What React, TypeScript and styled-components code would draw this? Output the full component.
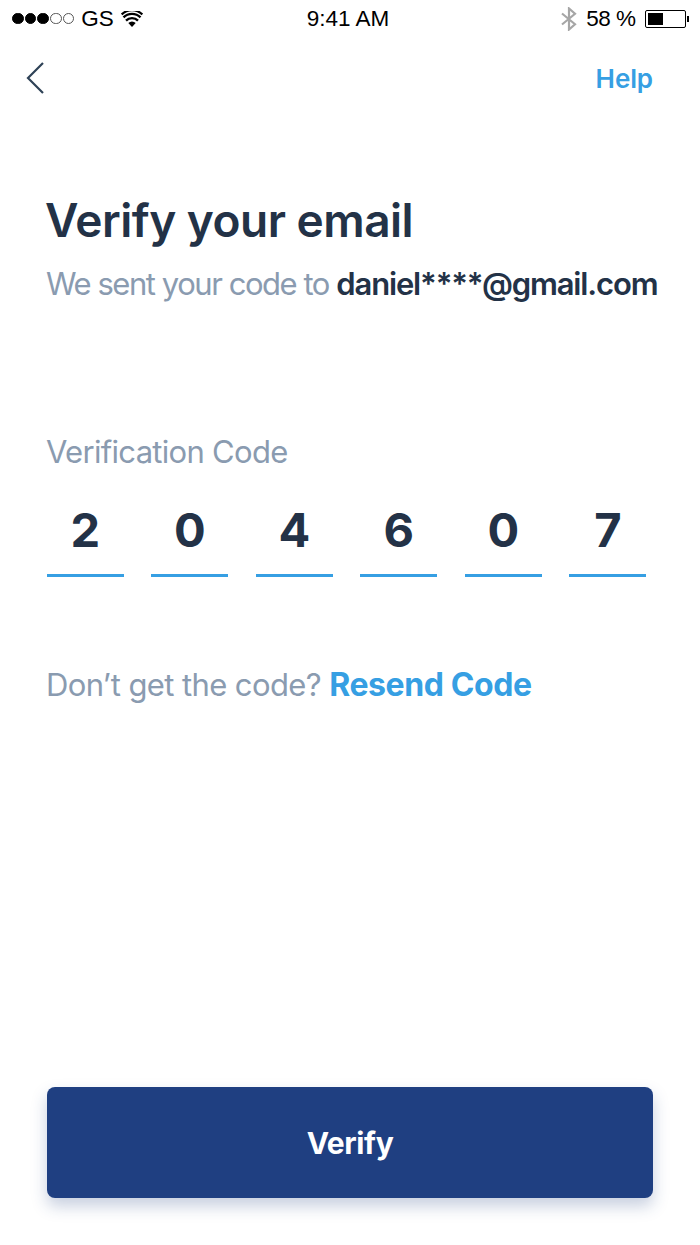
import React from "react";
import styled, { createGlobalStyle } from "styled-components";

const Global = createGlobalStyle`
  html, body { margin: 0; padding: 0; background: #fff; }
  body { font-family: Inter, "Liberation Sans", sans-serif; }
`;

const Screen = styled.div`
  width: 700px;
  height: 1245px;
  display: flex;
  flex-direction: column;
  background: #fff;
  overflow: hidden;
`;

const StatusBar = styled.div`
  height: 37px;
  display: grid;
  grid-template-columns: 1fr auto 1fr;
  align-items: center;
  padding: 0 11px 0 12px;
  font-family: "Liberation Sans", Arial, sans-serif;
  font-size: 22.5px;
  color: #000;
`;

const StatusLeft = styled.div`
  display: flex;
  align-items: center;
  gap: 7px;
`;

const StatusTime = styled.span`
  margin-right: 5px;
`;

const StatusRight = styled.div`
  display: flex;
  align-items: center;
  justify-content: flex-end;
  gap: 9.5px;
`;

const Percent = styled.span`
  letter-spacing: -0.5px;
`;

const Dots = styled.div`
  display: flex;
  gap: 1.2px;
`;

const Dot = styled.span<{ $on: boolean }>`
  width: 11.5px;
  height: 11.5px;
  box-sizing: border-box;
  border-radius: 50%;
  border: 1px solid ${(p) => (p.$on ? "#000" : "#555")};
  background: ${(p) => (p.$on ? "#000" : "transparent")};
`;

const Battery = styled.div`
  display: flex;
  align-items: center;
  gap: 1px;
`;

const BatteryShell = styled.div`
  width: 41px;
  height: 18px;
  box-sizing: border-box;
  border: 1px solid #000;
  border-radius: 2px;
  padding: 2px;
`;

const BatteryFill = styled.div`
  width: 15px;
  height: 100%;
  background: #000;
`;

const BatteryTip = styled.div`
  width: 2px;
  height: 6px;
  background: #000;
`;

const Nav = styled.div`
  height: 82px;
  display: flex;
  align-items: center;
  justify-content: space-between;
  padding: 0 47px 0 26px;
`;

const HelpLink = styled.a`
  font-size: 26px;
  font-weight: 600;
  color: #369fe3;
  letter-spacing: -0.1px;
`;

const Content = styled.main`
  flex: 1;
  display: flex;
  flex-direction: column;
  padding: 0 47px;
`;

const Title = styled.h1`
  margin: 73px 0 0 -2px;
  font-size: 46px;
  line-height: 56px;
  font-weight: 600;
  color: #233247;
  letter-spacing: -0.5px;
`;

const Subtitle = styled.p`
  margin: 16px -10px 0 -1px;
  font-size: 31px;
  line-height: 40px;
  color: #8a9bb0;
  letter-spacing: -1.45px;
  white-space: nowrap;
`;

const Email = styled.strong`
  font-weight: 600;
  color: #233247;
  letter-spacing: -1.15px;
`;

const Label = styled.div`
  margin: 128px 0 0 -1px;
  font-size: 31px;
  line-height: 40px;
  color: #8a9bb0;
  letter-spacing: -0.7px;
`;

const CodeRow = styled.div`
  margin-top: 29px;
  display: flex;
  gap: 27.7px;
`;

const Digit = styled.div`
  width: 76.8px;
  height: 76px;
  box-sizing: border-box;
  border-bottom: 3px solid #369fe3;
  text-align: center;
  font-size: 47px;
  line-height: 58px;
  font-weight: 700;
  color: #233247;
`;

const Resend = styled.p`
  margin: 88px 0 0 -1px;
  font-size: 31px;
  line-height: 40px;
  color: #8a9bb0;
  letter-spacing: -0.6px;
`;

const ResendLink = styled.a`
  font-size: 32px;
  font-weight: 700;
  color: #369fe3;
  letter-spacing: -0.4px;
`;

const Spacer = styled.div`
  flex: 1;
`;

const VerifyButton = styled.button`
  width: 606px;
  height: 111px;
  margin-bottom: 47px;
  border: 0;
  border-radius: 8px;
  background: #1f3f81;
  box-shadow: 0 8px 16px rgba(31, 63, 129, 0.25);
  color: #fff;
  font-family: inherit;
  font-size: 30px;
  font-weight: 700;
  letter-spacing: -0.4px;
`;

const code = ["2", "0", "4", "6", "0", "7"];

export default function App() {
  return (
    <Screen>
      <Global />
      <StatusBar>
        <StatusLeft>
          <Dots>
            {[1, 1, 1, 0, 0].map((on, i) => (
              <Dot key={i} $on={!!on} />
            ))}
          </Dots>
          <span>GS</span>
          <svg width="22" height="16" viewBox="0 0 22 16" aria-hidden="true">
            <path d="M11 16 7.3 12a5.2 5.2 0 0 1 7.4 0Z" fill="#000" />
            <path d="M5 9.6a8.4 8.4 0 0 1 12 0" fill="none" stroke="#000" strokeWidth="2.4" />
            <path d="M2.5 6.4a12 12 0 0 1 17 0" fill="none" stroke="#000" strokeWidth="2.4" />
            <path d="M.7 3.4a14.8 14.8 0 0 1 20.6 0" fill="none" stroke="#000" strokeWidth="2.2" />
          </svg>
        </StatusLeft>
        <StatusTime>9:41 AM</StatusTime>
        <StatusRight>
          <svg width="16" height="24" viewBox="0 0 16 24" aria-hidden="true">
            <path d="M1 6.5 14 17.2 8 22.5V1.5l6 5.3L1 17.5" fill="none" stroke="#a6a6a6" strokeWidth="2.2" />
          </svg>
          <Percent>58 %</Percent>
          <Battery>
            <BatteryShell>
              <BatteryFill />
            </BatteryShell>
            <BatteryTip />
          </Battery>
        </StatusRight>
      </StatusBar>
      <Nav>
        <svg width="18" height="32" viewBox="0 0 18 32" aria-hidden="true">
          <path d="M17 1 2 16l15 15" fill="none" stroke="#2f4257" strokeWidth="2.2" />
        </svg>
        <HelpLink>Help</HelpLink>
      </Nav>
      <Content>
        <Title>Verify your email</Title>
        <Subtitle>
          We sent your code to <Email>daniel****@gmail.com</Email>
        </Subtitle>
        <Label>Verification Code</Label>
        <CodeRow>
          {code.map((d, i) => (
            <Digit key={i}>{d}</Digit>
          ))}
        </CodeRow>
        <Resend>
          Don’t get the code? <ResendLink>Resend Code</ResendLink>
        </Resend>
        <Spacer />
        <VerifyButton>Verify</VerifyButton>
      </Content>
    </Screen>
  );
}
